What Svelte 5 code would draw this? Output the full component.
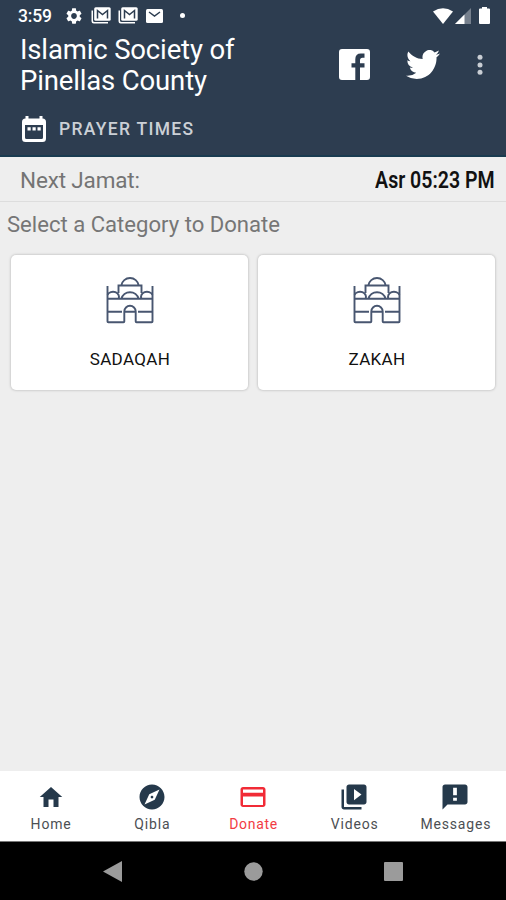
<script lang="ts">
	let active = $state('Donate');

	const categories = ['SADAQAH', 'ZAKAH'];

	const tabs = [
		{ name: 'Home', icon: 'M10 20v-6h4v6h4v-8h3L12 4 3 12h3v8z' },
		{
			name: 'Qibla',
			icon: 'M12 10.9c-.61 0-1.1.49-1.1 1.1s.49 1.1 1.1 1.1c.61 0 1.1-.49 1.1-1.1s-.49-1.1-1.1-1.1zM12 2C6.48 2 2 6.48 2 12s4.48 10 10 10 10-4.48 10-10S17.52 2 12 2zm2.19 12.19L6 18l3.81-8.19L18 6l-3.81 8.19z'
		},
		{
			name: 'Donate',
			icon: 'M20 4H4c-1.11 0-1.99.89-1.99 2L2 18c0 1.11.89 2 2 2h16c1.11 0 2-.89 2-2V6c0-1.11-.89-2-2-2zm0 14.3H4v-6.800h16v6.800zm0-9.800H4V6h16v2.500z'
		},
		{
			name: 'Videos',
			icon: 'M4 6H2v14c0 1.1.9 2 2 2h14v-2H4V6zm16-4H8c-1.1 0-2 .9-2 2v12c0 1.1.9 2 2 2h12c1.1 0 2-.9 2-2V4c0-1.1-.9-2-2-2zm-8 12.5v-9l6 4.5-6 4.5z'
		},
		{
			name: 'Messages',
			icon: 'M20 2H4c-1.1 0-1.99.9-1.99 2L2 22l4-4h14c1.1 0 2-.9 2-2V4c0-1.1-.9-2-2-2zm-6.500 13h-3v-2.500h3v2.500zm0-4.500h-3V4.500h3v6z'
		}
	];
</script>

<div class="screen">
	<header>
		<div class="status">
			<span class="clock">3:59</span>
			<svg class="gear" width="16" height="16" viewBox="2 2 20 20">
				<path d="M19.14 12.94c.04-.3.06-.61.06-.94 0-.32-.02-.64-.07-.94l2.03-1.58c.18-.14.23-.41.12-.61l-1.92-3.32c-.12-.22-.37-.29-.59-.22l-2.39.96c-.5-.38-1.03-.7-1.62-.94l-.36-2.54c-.04-.24-.24-.41-.48-.41h-3.84c-.24 0-.43.17-.47.41l-.36 2.54c-.59.24-1.13.57-1.62.94l-2.39-.96c-.22-.08-.47 0-.59.22L2.74 8.87c-.12.21-.08.47.12.61l2.03 1.58c-.05.3-.09.63-.09.94s.02.64.07.94l-2.03 1.58c-.18.14-.23.41-.12.61l1.92 3.32c.12.22.37.29.59.22l2.39-.96c.5.38 1.03.7 1.62.94l.36 2.54c.05.24.24.41.48.41h3.84c.24 0 .44-.17.47-.41l.36-2.54c.59-.24 1.13-.56 1.62-.94l2.39.96c.22.08.47 0 .59-.22l1.92-3.32c.12-.22.07-.47-.12-.61l-2.01-1.58zM12 15.6c-1.98 0-3.6-1.62-3.6-3.6s1.62-3.6 3.6-3.6 3.6 1.62 3.6 3.6-1.62 3.6-3.6 3.6z" />
			</svg>
			{#each [0, 1] as n (n)}
				<svg class="mails" width="20" height="17" viewBox="0 0 20 17">
					<path d="M2 3.500H.5v10.700q0 2.300 2.300 2.300H17V15H3.500Q2 15 2 13.500z" />
					<rect x="3.200" y=".3" width="16.500" height="13.500" rx="1.500" />
					<path class="flap" d="M6.500 11.500V3.500L11.500 7.500 16.500 3.500V11.500" />
				</svg>
			{/each}
			<svg class="mail" width="17" height="14" viewBox="0 0 17 14">
				<rect width="17" height="14" rx="1.500" />
				<path class="flap" d="M3 3 8.500 7 14 3" />
			</svg>
			<i class="more-dot"></i>
			<svg class="wifi" width="20" height="16" viewBox="0 0 20 16">
				<path d="M0 3.500Q10-3 20 3.500L10 16z" />
			</svg>
			<svg class="signal" width="16" height="16" viewBox="0 0 16 16">
				<path opacity=".35" d="M16 0v16H0z" />
				<path d="M9.500 6.500V16H0z" />
			</svg>
			<svg width="11" height="17" viewBox="0 0 11 17">
				<path d="M3 0h5v1.500H10q1 0 1 1V16q0 1-1 1H1q-1 0-1-1V2.500q0-1 1-1h2z" />
			</svg>
		</div>

		<div class="title-row">
			<h1>Islamic Society of<br />Pinellas County</h1>
			<svg class="facebook" width="31" height="31" viewBox="0 0 31 31">
				<path d="M3 0h25q3 0 3 3v25q0 3-3 3h-7V18.500h4.500v-4.200H21v-3q0-2.500 2.500-2.500h2V4.500h-3.700q-5.500 0-5.500 5.800v4H12.500v4.200h3.800V31H3q-3 0-3-3V3q0-3 3-3z" />
			</svg>
			<svg class="twitter" width="34" height="29" viewBox="0 2.200 24 19.600" preserveAspectRatio="none">
				<path d="M23.953 4.570a10 10 0 01-2.825.775 4.958 4.958 0 002.163-2.723c-.951.555-2.005.959-3.127 1.184a4.920 4.920 0 00-8.384 4.482C7.690 8.095 4.067 6.130 1.640 3.162a4.822 4.822 0 00-.666 2.475c0 1.710.870 3.213 2.188 4.096a4.904 4.904 0 01-2.228-.616v.060a4.923 4.923 0 003.946 4.827 4.996 4.996 0 01-2.212.085 4.936 4.936 0 004.604 3.417 9.867 9.867 0 01-6.102 2.105c-.390 0-.779-.023-1.170-.067a13.995 13.995 0 007.557 2.209c9.053 0 13.998-7.496 13.998-13.985 0-.210 0-.420-.015-.630A9.935 9.935 0 0024 4.590z" />
			</svg>
			<svg class="menu" width="6" height="22" viewBox="0 0 6 22">
				<circle cx="3" cy="3.300" r="2.500" />
				<circle cx="3" cy="10.900" r="2.500" />
				<circle cx="3" cy="18.300" r="2.500" />
			</svg>
		</div>

		<div class="prayer">
			<svg width="24" height="26" viewBox="0 0 24 26">
				<path fill-rule="evenodd" d="M3.500 0h3v2.500h11V0h3v2.500Q24 2.500 24 6v16.500q0 3.500-3.500 3.500h-17Q0 26 0 22.500V6q0-3.500 3.500-3.500zM3 9v12.500q0 1.500 1.500 1.500h15q1.500 0 1.500-1.500V9zM5.500 11.200h3.200v3.200H5.500zM10.500 11.200h3.200v3.200h-3.200zM15.500 11.200h3.200v3.200h-3.200z" />
			</svg>
			<span>PRAYER TIMES</span>
		</div>
	</header>

	<div class="jamat">
		<span class="label">Next Jamat:</span>
		<strong>Asr 05:23 PM</strong>
	</div>

	<main>
		<h2>Select a Category to Donate</h2>
		<div class="cards">
			{#each categories as category}
				<button class="card">
					<svg width="48" height="49" viewBox="0 0 48 49">
						<!-- walls and gate -->
						<path d="M1.500 11v35.500q0 .8.800.8H17.500q.8 0 .8-.8V36.500a5.700 5.700 0 0 1 11.400 0v10q0 .8.800.8H45.700q.8 0 .8-.8V11" />
						<path d="M1.500 23.800h45M1.500 36.800h14.500M18.300 36.800h11.400M32 36.800h14.500" />
						<!-- domes -->
						<path d="M12.500 18v-7.500h23V18M15.300 10.500a8.800 8.800 0 0 1 17.400 0M15.500 23.800a8.700 8.300 0 0 1 17 0" />
						<path d="M1.500 19.800a6 5 0 0 1 11 4M46.500 19.800a6 5 0 0 0-11 4" />
					</svg>
					<span>{category}</span>
				</button>
			{/each}
		</div>
	</main>

	<nav>
		{#each tabs as tab}
			<button class="tab" class:active={active === tab.name} onclick={() => (active = tab.name)}>
				<svg width="30" height="30" viewBox="0 0 24 24"><path fill-rule="evenodd" d={tab.icon} /></svg>
				<span>{tab.name}</span>
			</button>
		{/each}
	</nav>

	<footer>
		<svg width="19" height="21" viewBox="0 0 19 21"><path d="M19 0v21L0 10.500z" /></svg>
		<svg width="19" height="19" viewBox="0 0 19 19"><circle cx="9.500" cy="9.500" r="9.200" /></svg>
		<svg width="19" height="19" viewBox="0 0 19 19"><rect width="19" height="19" rx="1" /></svg>
	</footer>
</div>

<style>
	:global(body) {
		font-family: Roboto, sans-serif;
	}

	.screen {
		display: flex;
		flex-direction: column;
		width: 506px;
		height: 900px;
		background: #eeeeee;
		overflow: hidden;
	}

	svg {
		display: block;
		flex: none;
	}

	button {
		border: none;
		padding: 0;
		font-family: inherit;
	}

	header {
		box-sizing: border-box;
		height: 157px;
		background: #2d3d50;
		border-bottom: 2px solid #193b50;
		color: #fff;
		fill: #fff;
	}

	.status {
		display: flex;
		align-items: center;
		height: 31px;
		padding: 0 16px 0 18px;
	}

	.clock {
		width: 48px;
		font-size: 17.5px;
		font-weight: 500;
		letter-spacing: -0.15px;
	}

	.gear {
		margin-right: 9px;
	}

	.mails {
		margin-right: 7px;
	}

	.mail {
		margin-left: 1px;
	}

	.flap {
		fill: none;
		stroke: #2d3d50;
		stroke-width: 1.5;
	}

	.more-dot {
		width: 5px;
		height: 5px;
		margin-left: 17px;
		border-radius: 50%;
		background: #fff;
	}

	.wifi {
		margin-left: auto;
		margin-right: 2px;
	}

	.signal {
		margin-right: 8px;
	}

	.title-row {
		display: flex;
		align-items: center;
		height: 67px;
		padding: 0 23px 1px 20px;
	}

	h1 {
		flex: 1;
		margin: 0;
		padding-top: 1px;
		font-size: 27.5px;
		font-weight: 400;
		line-height: 31px;
		letter-spacing: -0.15px;
		white-space: nowrap;
	}

	.facebook {
		margin-right: 36px;
	}

	.twitter {
		margin-right: 37px;
	}

	.menu {
		fill: #c9ced4;
	}

	.prayer {
		display: flex;
		align-items: center;
		height: 59px;
		padding-left: 22px;
		gap: 13px;
	}

	.prayer span {
		padding-top: 1px;
		color: #cbd0d6;
		font-size: 17.5px;
		font-weight: 500;
		letter-spacing: 1.3px;
	}

	.jamat {
		box-sizing: border-box;
		display: flex;
		align-items: center;
		justify-content: space-between;
		height: 45px;
		padding: 2px 11px 0 20px;
		border-bottom: 1px solid #dddddd;
	}

	.label {
		color: #747474;
		font-size: 22.5px;
		letter-spacing: -0.15px;
	}

	strong {
		padding-top: 1px;
		color: #111;
		font-size: 23px;
		font-weight: 600;
		white-space: nowrap;
		transform: scaleX(0.85);
		transform-origin: right;
	}

	main {
		flex: 1;
	}

	h2 {
		margin: 0;
		padding-left: 7px;
		color: #767676;
		font-size: 22.1px;
		font-weight: 400;
		line-height: 44px;
	}

	.cards {
		display: grid;
		grid-template-columns: 1fr 1fr;
		gap: 10px;
		padding: 9px 11px 0;
	}

	.card {
		display: flex;
		flex-direction: column;
		align-items: center;
		height: 135px;
		padding-top: 20px;
		border-radius: 5px;
		background: #fff;
		box-shadow: 0 0 2px 1px #cfcfcf;
	}

	.card svg {
		fill: none;
		stroke: #485670;
		stroke-width: 1.9;
	}

	.card span {
		margin-top: 24px;
		padding-left: 1px;
		color: #111;
		font-size: 17px;
		line-height: 22px;
		letter-spacing: 0.35px;
	}

	nav {
		display: grid;
		grid-template-columns: repeat(5, 1fr);
		height: 70px;
		background: #fff;
		border-bottom: 1px solid #777;
	}

	.tab {
		display: flex;
		flex-direction: column;
		align-items: center;
		padding-top: 11px;
		background: none;
		color: #4c4f53;
		fill: #25394b;
	}

	.tab span {
		margin-top: 2px;
		padding-left: 1px;
		font-size: 14px;
		line-height: 20px;
		letter-spacing: 0.85px;
	}

	.tab.active {
		color: #f23b43;
		fill: #f12b36;
	}

	.tab.active span {
		letter-spacing: 0.7px;
	}

	footer {
		display: flex;
		align-items: center;
		justify-content: space-between;
		height: 58px;
		padding: 0 103px;
		background: #000;
		fill: #9b9b9b;
	}
</style>
